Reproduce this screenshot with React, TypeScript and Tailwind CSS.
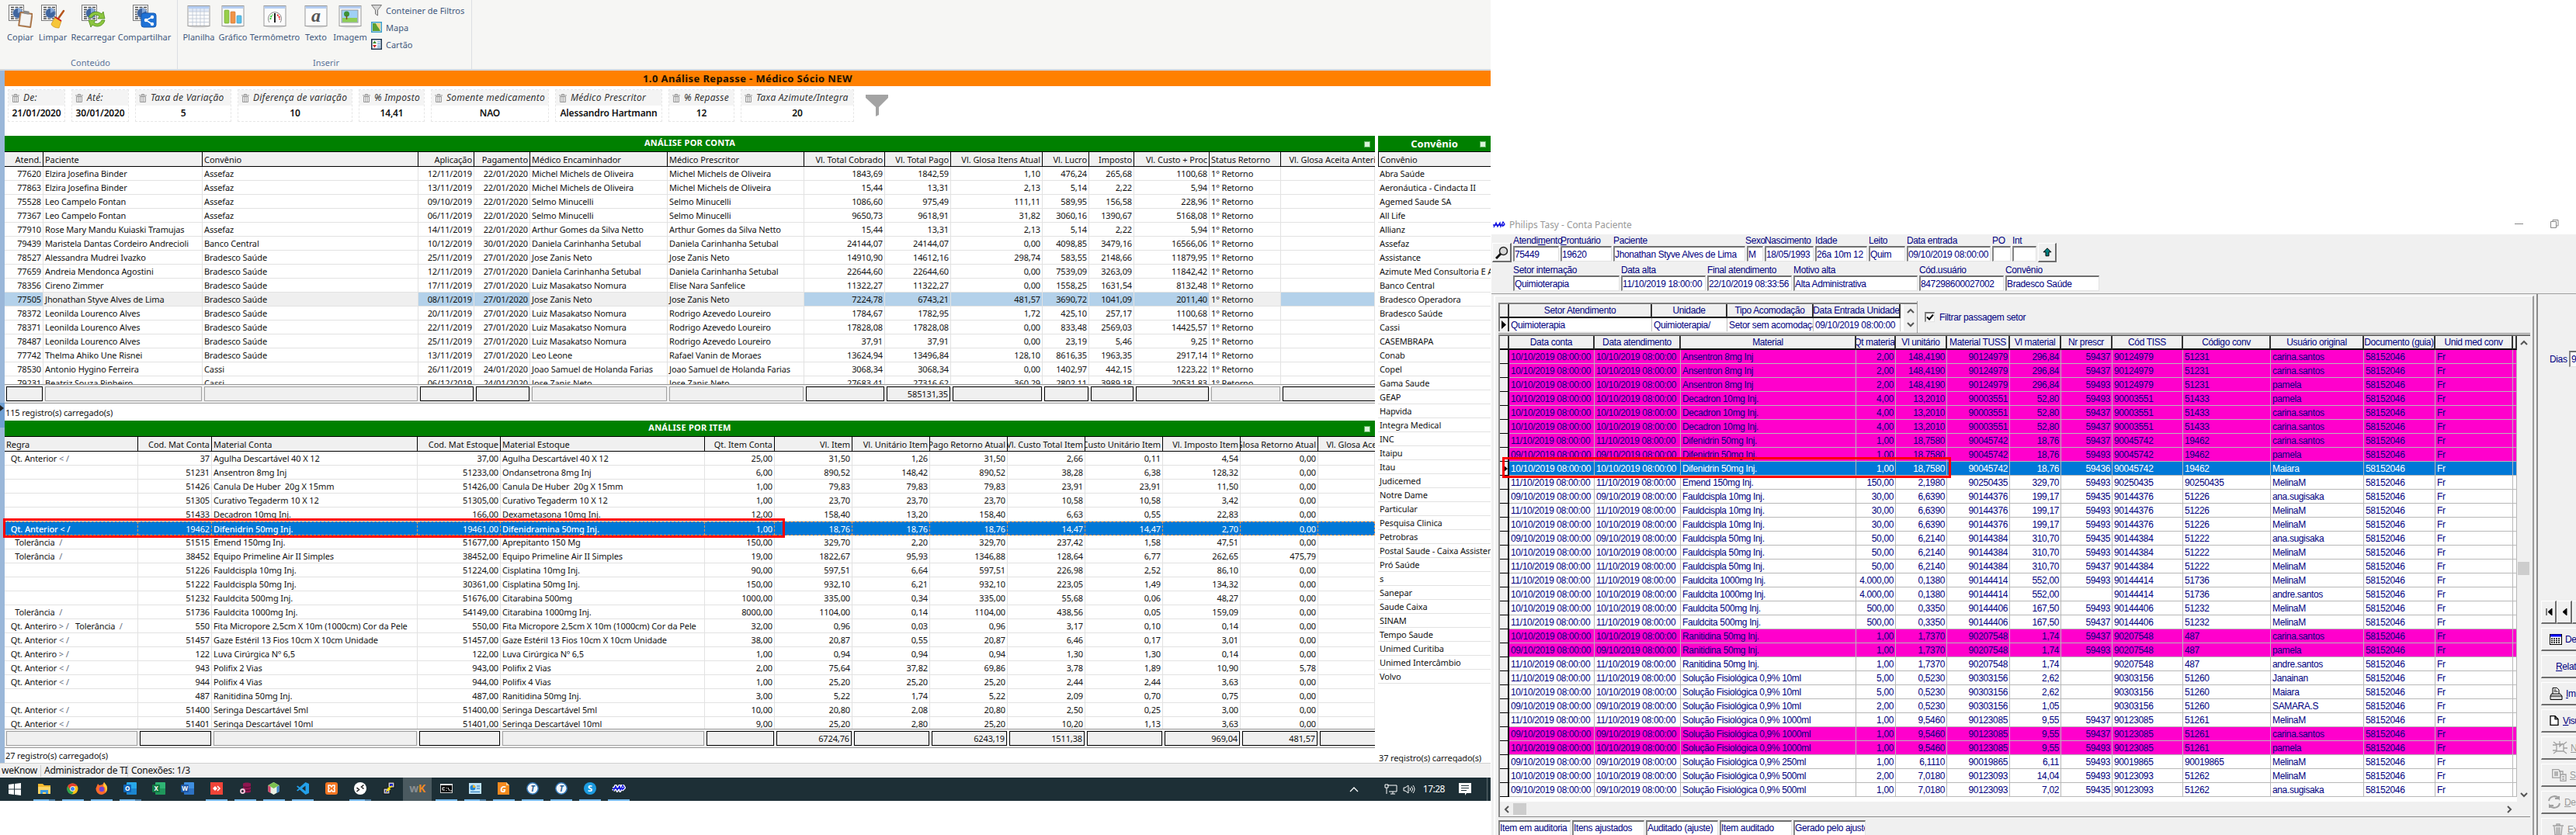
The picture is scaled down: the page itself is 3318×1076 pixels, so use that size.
import React from "react";

const contaCols =
  "grid-cols-[50px_205px_278px_72px_72px_177px_176px_104px_85px_118px_60px_58px_97px_92px_121px]";
const itemCols =
  "grid-cols-[172px_95px_265px_107px_263px_90px_100px_100px_100px_100px_100px_100px_100px_73px]";
const tasyCols =
  "grid-cols-[12px_110px_111px_226px_51px_66px_81px_66px_66px_91px_113px_120px_92px_100px_5px]";

const contaHead =
  "Atend.|Paciente|Convênio|Aplicação|Pagamento|Médico Encaminhador|Médico Prescritor|Vl. Total Cobrado|Vl. Total Pago|Vl. Glosa Itens Atual|Vl. Lucro|Imposto|Vl. Custo + Proc|Status Retorno|   Vl. Glosa Aceita Anterior".split("|");
const contaAlign = "rllrrllrrrrrrll";
const conta = `77620|Elzira Josefina Binder|Assefaz|12/11/2019|22/01/2020|Michel Michels de Oliveira|Michel Michels de Oliveira|1843,69|1842,59|1,10|476,24|265,68|1100,68
77863|Elzira Josefina Binder|Assefaz|13/11/2019|22/01/2020|Michel Michels de Oliveira|Michel Michels de Oliveira|15,44|13,31|2,13|5,14|2,22|5,94
75528|Leo Campelo Fontan|Assefaz|09/10/2019|22/01/2020|Selmo Minucelli|Selmo Minucelli|1086,60|975,49|111,11|589,95|156,58|228,96
77367|Leo Campelo Fontan|Assefaz|06/11/2019|22/01/2020|Selmo Minucelli|Selmo Minucelli|9650,73|9618,91|31,82|3060,16|1390,67|5168,08
77910|Rose Mary Mandu Kuiaski Tramujas|Assefaz|14/11/2019|22/01/2020|Arthur Gomes da Silva Netto|Arthur Gomes da Silva Netto|15,44|13,31|2,13|5,14|2,22|5,94
79439|Maristela Dantas Cordeiro Andrecioli|Banco Central|10/12/2019|30/01/2020|Daniela Carinhanha Setubal|Daniela Carinhanha Setubal|24144,07|24144,07|0,00|4098,85|3479,16|16566,06
78527|Alessandra Mudrei Ivazko|Bradesco Saúde|25/11/2019|27/01/2020|Jose Zanis Neto|Jose Zanis Neto|14910,90|14612,16|298,74|583,55|2148,66|11879,95
77659|Andreia Mendonca Agostini|Bradesco Saúde|12/11/2019|27/01/2020|Daniela Carinhanha Setubal|Daniela Carinhanha Setubal|22644,60|22644,60|0,00|7539,09|3263,09|11842,42
78356|Cireno Zimmer|Bradesco Saúde|17/11/2019|27/01/2020|Luiz Masakatso Nomura|Elise Nara Sanfelice|11322,27|11322,27|0,00|1558,25|1631,54|8132,48
77505|Jhonathan Styve Alves de Lima|Bradesco Saúde|08/11/2019|27/01/2020|Jose Zanis Neto|Jose Zanis Neto|7224,78|6743,21|481,57|3690,72|1041,09|2011,40
78372|Leonilda Lourenco Alves|Bradesco Saúde|20/11/2019|27/01/2020|Luiz Masakatso Nomura|Rodrigo Azevedo Loureiro|1784,67|1782,95|1,72|425,10|257,17|1100,68
78371|Leonilda Lourenco Alves|Bradesco Saúde|22/11/2019|27/01/2020|Luiz Masakatso Nomura|Rodrigo Azevedo Loureiro|17828,08|17828,08|0,00|833,48|2569,03|14425,57
78487|Leonilda Lourenco Alves|Bradesco Saúde|25/11/2019|27/01/2020|Luiz Masakatso Nomura|Rodrigo Azevedo Loureiro|37,91|37,91|0,00|23,19|5,46|9,25
77742|Thelma Ahiko Une Risnei|Bradesco Saúde|13/11/2019|27/01/2020|Leo Leone|Rafael Vanin de Moraes|13624,94|13496,84|128,10|8616,35|1963,35|2917,14
78530|Antonio Hygino Ferreira|Cassi|26/11/2019|24/01/2020|Joao Samuel de Holanda Farias|Joao Samuel de Holanda Farias|3068,34|3068,34|0,00|1402,97|442,15|1223,22
79231|Beatriz Souza Pinheiro|Cassi|06/12/2019|24/01/2020|Jose Zanis Neto|Jose Zanis Neto|27683,41|27316,62|360,29|2802,11|3989,18|20531,83`
  .split("\n")
  .map((r) => (r + "|1° Retorno|").split("|"));

const itemHead =
  "Regra|Cod. Mat Conta|Material Conta|Cod. Mat Estoque|Material Estoque|Qt. Item Conta|Vl. Item|Vl. Unitário Item|Vl. Pago Retorno Atual|Vl. Custo Total Item|Vl. Custo Unitário Item|Vl. Imposto Item|Vl. Glosa Retorno Atual|   Vl. Glosa Aceita".split("|");
const itemAlign = "lrlrlrrrrrrrrl";
const item = ` Qt. Anterior < /|37|Agulha Descartável 40 X 12|37,00|Agulha Descartável 40 X 12|25,00|31,50|1,26|31,50|2,66|0,11|4,54|0,00
|51231|Ansentron 8mg Inj|51233,00|Ondansetrona 8mg Inj|6,00|890,52|148,42|890,52|38,28|6,38|128,32|0,00
|51426|Canula De Huber  20g X 15mm|51426,00|Canula De Huber  20g X 15mm|1,00|79,83|79,83|79,83|23,91|23,91|11,50|0,00
|51305|Curativo Tegaderm 10 X 12|51305,00|Curativo Tegaderm 10 X 12|1,00|23,70|23,70|23,70|10,58|10,58|3,42|0,00
|51433|Decadron 10mg Inj.|166,00|Dexametasona 10mg Inj.|12,00|158,40|13,20|158,40|6,63|0,55|22,83|0,00
 Qt. Anterior < /|19462|Difenidrin 50mg Inj.|19461,00|Difenidramina 50mg Inj.|1,00|18,76|18,76|18,76|14,47|14,47|2,70|0,00
   Tolerância  /|51515|Emend 150mg Inj.|51677,00|Aprepitanto 150 Mg|150,00|329,70|2,20|329,70|237,42|1,58|47,51|0,00
   Tolerância  /|38452|Equipo Primeline Air II Simples|38452,00|Equipo Primeline Air II Simples|19,00|1822,67|95,93|1346,88|128,64|6,77|262,65|475,79
|51226|Fauldcispla 10mg Inj.|51224,00|Cisplatina 10mg Inj.|90,00|597,51|6,64|597,51|226,98|2,52|86,10|0,00
|51222|Fauldcispla 50mg Inj.|30361,00|Cisplatina 50mg Inj.|150,00|932,10|6,21|932,10|223,05|1,49|134,32|0,00
|51232|Fauldcita 500mg Inj.|51676,00|Citarabina 500mg|1000,00|335,00|0,34|335,00|55,68|0,06|48,27|0,00
   Tolerância  /|51736|Fauldcita 1000mg Inj.|54149,00|Citarabina 1000mg Inj.|8000,00|1104,00|0,14|1104,00|438,56|0,05|159,09|0,00
 Qt. Anteriro > /   Tolerância  /|550|Fita Micropore 2,5cm X 10m (1000cm) Cor da Pele|550,00|Fita Micropore 2,5cm X 10m (1000cm) Cor da Pele|32,00|0,96|0,03|0,96|3,17|0,10|0,14|0,00
 Qt. Anterior < /|51457|Gaze Estéril 13 Fios 10cm X 10cm Unidade|51457,00|Gaze Estéril 13 Fios 10cm X 10cm Unidade|38,00|20,87|0,55|20,87|6,46|0,17|3,01|0,00
 Qt. Anteriro > /|122|Luva Cirúrgica Nº 6,5|122,00|Luva Cirúrgica Nº 6,5|1,00|0,94|0,94|0,94|1,30|1,30|0,14|0,00
 Qt. Anterior < /|943|Polifix 2 Vias|943,00|Polifix 2 Vias|2,00|75,64|37,82|69,86|3,78|1,89|10,90|5,78
 Qt. Anterior < /|944|Polifix 4 Vias|944,00|Polifix 4 Vias|1,00|25,20|25,20|25,20|2,44|2,44|3,63|0,00
|487|Ranitidina 50mg Inj.|487,00|Ranitidina 50mg Inj.|3,00|5,22|1,74|5,22|2,09|0,70|0,75|0,00
 Qt. Anterior < /|51400|Seringa Descartável 5ml|51400,00|Seringa Descartável 5ml|10,00|20,80|2,08|20,80|2,50|0,25|3,00|0,00
 Qt. Anterior < /|51401|Seringa Descartável 10ml|51401,00|Seringa Descartável 10ml|9,00|25,20|2,80|25,20|10,20|1,13|3,63|0,00`
  .split("\n")
  .map((r) => (r + "|").split("|"));

const convenios =
  "Abra Saúde|Aeronáutica - Cindacta II|Agemed Saude SA|All Life|Allianz|Assefaz|Assistance|Azimute Med Consultoria E Assessoria|Banco Central|Bradesco Operadora|Bradesco Saúde|Cassi|CASEMBRAPA|Conab|Copel|Gama Saude|GEAP|Hapvida|Integra Medical|INC|Itaipu|Itau|Judicemed|Notre Dame|Particular|Pesquisa Clinica|Petrobras|Postal Saude - Caixa Assistencial|Pró Saúde|s|Sanepar|Saude Caixa|SINAM|Tempo Saude|Unimed Curitiba|Unimed Intercâmbio|Volvo".split("|");

const tasyHead =
  "|Data conta|Data atendimento|Material|Qt material|Vl unitário|Material TUSS|Vl material|Nr prescr|Cód TISS|Código conv|Usuário original|Documento (guia)|Unid med conv|".split("|");
const tasyAlign = "llllrrrrrllllll";
// tone, day, material, quantity, unit price, TUSS, total, prescription, code, user
const tasy = `m|10|Ansentron 8mg Inj|2,00|148,4190|90124979|296,84|59437|51231|carina.santos
m|10|Ansentron 8mg Inj|2,00|148,4190|90124979|296,84|59437|51231|carina.santos
m|10|Ansentron 8mg Inj|2,00|148,4190|90124979|296,84|59493|51231|pamela
m|10|Decadron 10mg Inj.|4,00|13,2010|90003551|52,80|59493|51433|pamela
m|10|Decadron 10mg Inj.|4,00|13,2010|90003551|52,80|59437|51433|carina.santos
m|10|Decadron 10mg Inj.|4,00|13,2010|90003551|52,80|59437|51433|carina.santos
m|11|Difenidrin 50mg Inj.|1,00|18,7580|90045742|18,76|59437|19462|carina.santos
m|09|Difenidrin 50mg Inj.|1,00|18,7580|90045742|18,76|59493|19462|pamela
s|10|Difenidrin 50mg Inj.|1,00|18,7580|90045742|18,76|59436|19462|Maiara
w|11|Emend 150mg Inj.|150,00|2,1980|90250435|329,70|59493|90250435|MelinaM
w|09|Fauldcispla 10mg Inj.|30,00|6,6390|90144376|199,17|59435|51226|ana.sugisaka
w|11|Fauldcispla 10mg Inj.|30,00|6,6390|90144376|199,17|59493|51226|MelinaM
w|10|Fauldcispla 10mg Inj.|30,00|6,6390|90144376|199,17|59493|51226|MelinaM
w|09|Fauldcispla 50mg Inj.|50,00|6,2140|90144384|310,70|59435|51222|ana.sugisaka
w|10|Fauldcispla 50mg Inj.|50,00|6,2140|90144384|310,70|59493|51222|MelinaM
w|11|Fauldcispla 50mg Inj.|50,00|6,2140|90144384|310,70|59437|51222|MelinaM
w|11|Fauldcita 1000mg Inj.|4.000,00|0,1380|90144414|552,00|59493|51736|MelinaM
w|10|Fauldcita 1000mg Inj.|4.000,00|0,1380|90144414|552,00||51736|andre.santos
w|10|Fauldcita 500mg Inj.|500,00|0,3350|90144406|167,50|59493|51232|MelinaM
w|11|Fauldcita 500mg Inj.|500,00|0,3350|90144406|167,50|59437|51232|MelinaM
m|10|Ranitidina 50mg Inj.|1,00|1,7370|90207548|1,74|59437|487|carina.santos
m|09|Ranitidina 50mg Inj.|1,00|1,7370|90207548|1,74|59493|487|pamela
w|11|Ranitidina 50mg Inj.|1,00|1,7370|90207548|1,74||487|andre.santos
w|11|Solução Fisiológica 0,9% 10ml|5,00|0,5230|90303156|2,62||51260|Janainan
w|10|Solução Fisiológica 0,9% 10ml|5,00|0,5230|90303156|2,62||51260|Maiara
w|09|Solução Fisiológica 0,9% 10ml|2,00|0,5230|90303156|1,05||51260|SAMARA.S
w|11|Solução Fisiológica 0,9% 1000ml|1,00|9,5460|90123085|9,55|59437|51261|MelinaM
m|09|Solução Fisiológica 0,9% 1000ml|1,00|9,5460|90123085|9,55|59437|51261|carina.santos
m|10|Solução Fisiológica 0,9% 1000ml|1,00|9,5460|90123085|9,55|59493|51261|pamela
w|09|Solução Fisiológica 0,9% 250ml|1,00|6,1110|90019865|6,11|59493|90019865|MelinaM
w|10|Solução Fisiológica 0,9% 500ml|2,00|7,0180|90123093|14,04|59493|51262|MelinaM
w|09|Solução Fisiológica 0,9% 500ml|1,00|7,0180|90123093|7,02|59435|51262|ana.sugisaka`
  .split("\n")
  .map((r) => {
    const [tone, d, mat, q, u, tuss, tot, presc, cod, user] = r.split("|");
    const date = `${d}/10/2019 08:00:00`;
    return { tone, cells: ["", date, date, mat, q, u, tuss, tot, presc, tuss, cod, user, "58152046", "Fr", ""] };
  });

/* ---------- report grids ---------- */

function HeadRow({ cols, labels, align }: { cols: string; labels: string[]; align: string }) {
  return (
    <div className={`grid h-5 border-y border-black bg-[#f0f0f0] tracking-[-0.05px] ${cols}`}>
      {labels.map((l, i) => (
        <div
          key={i}
          className={`flex items-center overflow-hidden whitespace-pre px-[2px] ${
            i < labels.length - 1 ? "border-r border-black" : ""
          } ${align[i] === "r" ? "justify-end" : "justify-start"}`}
        >
          {l}
        </div>
      ))}
    </div>
  );
}

function Totals({ cols, align, values }: { cols: string; align: string; values: Record<number, string> }) {
  return (
    <div className={`grid border-y border-[#999] bg-[#f0f0f0] ${cols}`}>
      {align.split("").map((a, i) => {
        const last = i === align.length - 1;
        const money = a === "r" || last;
        return (
          <div
            key={i}
            className={`my-[2px] ml-[2px] flex items-center justify-end overflow-hidden border px-[2px] ${
              money ? "border-black" : "border-[#a0a0a0]"
            } ${last ? "border-r-0" : "mr-px"}`}
          >
            {values[i] ?? ""}
          </div>
        );
      })}
    </div>
  );
}

function GreenBar({ title, big }: { title: string; big?: boolean }) {
  return (
    <div className="relative flex h-5 shrink-0 items-center justify-center bg-[#008000] font-bold text-white">
      <span className={big ? "text-[13px] tracking-normal" : "-mt-1 text-[11px] tracking-[0.25px]"}>{title}</span>
      <span className="absolute right-[6px] top-[7px] size-[8px] border border-[#5fb35f] bg-[#d9f5d9]" />
    </div>
  );
}

function Regra({ text, sel }: { text: string; sel: boolean }) {
  return (
    <>
      {text.split(/([<>/])/).map((p, i) => (
        <span key={i} className={!sel && /[<>/]/.test(p) ? "text-gray-500" : ""}>
          {p}
        </span>
      ))}
    </>
  );
}

/* ---------- toolbar ---------- */

function ReportBase() {
  return (
    <>
      <rect x="0.5" y="0.5" width="19" height="20" fill="#fafafa" stroke="#7a7a7a" />
      <path
        d="M3 3.500h15M3 6.500h15M3 9.500h15M3 12.500h15M3 15.500h15M3 18h15"
        stroke="#4a4a4a"
        strokeWidth="1.500"
        strokeDasharray="4 1.500"
      />
      <circle cx="12" cy="11" r="6.500" fill="#3f659f" stroke="#b9c9e2" strokeWidth=".8" />
      <path d="M12 11V4.500a6.500 6.500 0 0 1 5.500 3.500z" fill="#86a8d8" />
    </>
  );
}

function Frame({ children }: { children?: React.ReactNode }) {
  return (
    <svg width="31" height="32" viewBox="0 0 31 32">
      <ellipse cx="15.500" cy="29" rx="13" ry="2" fill="#ddd" />
      <rect x="1" y="2.500" width="28" height="26" fill="#fbfbfb" stroke="#9a9a9a" />
      <rect x="1.500" y="3" width="27" height="3" fill="#b4cdf2" />
      {children}
    </svg>
  );
}

const contentTools = [
  {
    label: "Copiar",
    w: "w-[42px]",
    art: (
      <g transform="rotate(8 22 22)">
        <rect x="13" y="10" width="17" height="19" rx="1" fill="#a86f3f" />
        <rect x="15" y="12" width="13" height="15" fill="#f4f4f4" stroke="#ccc" strokeWidth=".5" />
        <rect x="18" y="8" width="7" height="4" rx="1" fill="#8b8b8b" />
      </g>
    ),
  },
  {
    label: "Limpar",
    w: "w-[42px]",
    art: (
      <>
        <path d="M29 8L22 18" stroke="#b5551d" strokeWidth="2.500" strokeLinecap="round" />
        <path d="M18 16l8 5-3 9c-5 0-9-2-10-5z" fill="#f6c63a" stroke="#c98f17" strokeWidth=".7" />
        <path d="M18 16l8 5" stroke="#c22" strokeWidth="2" />
      </>
    ),
  },
  {
    label: "Recarregar",
    w: "w-[62px]",
    art: (
      <>
        <path d="M9 16c3-7 11-9 17-4l2-3 2 9h-9l2-3c-4-3-8-2-10 2z" fill="#8cc63f" stroke="#4c8a14" strokeWidth=".8" />
        <path d="M30 20c-2 8-10 10-16 6l-2 3-3-9h9l-2 3c4 3 8 1 10-3z" fill="#8cc63f" stroke="#4c8a14" strokeWidth=".8" />
      </>
    ),
  },
  {
    label: "Compartilhar",
    w: "w-[70px]",
    art: (
      <>
        <rect x="11" y="11" width="19" height="18" rx="3" fill="#1f72d6" stroke="#1559b0" />
        <path d="M25 16l-8 4 8 5" stroke="#fff" strokeWidth="1.500" fill="none" />
        <circle cx="25" cy="16" r="2.200" fill="#fff" />
        <circle cx="17" cy="20" r="2.200" fill="#fff" />
        <circle cx="25" cy="25" r="2.200" fill="#fff" />
      </>
    ),
  },
];

const insertTools = [
  {
    label: "Planilha",
    w: "w-[46px]",
    art: (
      <>
        <rect x="2" y="6" width="26" height="4" fill="#dfe8f5" />
        <path d="M2 10h26M2 14.500h26M2 19h26M2 23.500h26M7 6v22M12 6v22M17 6v22M22 6v22" stroke="#bcc7d6" strokeWidth=".8" />
      </>
    ),
  },
  {
    label: "Gráfico",
    w: "w-[42px]",
    art: (
      <>
        <rect x="4" y="8" width="6" height="17" rx="1" fill="#97cf4b" stroke="#6ba326" strokeWidth=".6" />
        <rect x="12" y="10" width="6" height="15" rx="1" fill="#ef9448" stroke="#c9702a" strokeWidth=".6" />
        <rect x="20" y="15" width="6" height="10" rx="1" fill="#5cbfe8" stroke="#3597c4" strokeWidth=".6" />
      </>
    ),
  },
  {
    label: "Termômetro",
    w: "w-[66px]",
    art: (
      <>
        <path d="M8 24a8.500 8.500 0 1 1 14 0" fill="none" stroke="#888" strokeWidth="1" />
        <path d="M9.500 20a6 6 0 0 1 3-6" fill="none" stroke="#3c3" strokeWidth="2" strokeDasharray="2 1" />
        <path d="M18 14a6 6 0 0 1 3 6" fill="none" stroke="#e22" strokeWidth="2" strokeDasharray="2 1" />
        <path d="M15 12v12" stroke="#222" strokeWidth="2" />
      </>
    ),
  },
  { label: "Texto", w: "w-[40px]", art: null },
  {
    label: "Imagem",
    w: "w-[48px]",
    art: (
      <>
        <rect x="4" y="8" width="21" height="16" fill="#9fd0f5" stroke="#999" />
        <rect x="5" y="18" width="19" height="5.500" fill="#8fce55" />
        <circle cx="10.500" cy="13" r="3.500" fill="#3d9136" />
        <path d="M10.500 15v5" stroke="#7a4b1c" strokeWidth="1.500" />
      </>
    ),
  },
];

function Toolbar() {
  return (
    <div className="flex h-[91px] shrink-0 border-b-2 border-[#d4d7da] bg-[#f6f6f4] text-[11px] tracking-[0px] text-[#3f587c]">
      <div className="flex w-[229px] flex-col border-r border-[#dcdfe3] pl-[5px]">
        <div className="flex h-[72px] pt-[5px]">
          {contentTools.map((t) => (
            <div key={t.label} className={`flex flex-col items-center ${t.w}`}>
              <svg width="32" height="32" viewBox="-1 -1 32 32">
                <ReportBase />
                {t.art}
              </svg>
              <span className="mt-[3px] leading-4">{t.label}</span>
            </div>
          ))}
        </div>
        <div className="text-center leading-[17px] text-[#5b7399]">Conteúdo</div>
      </div>
      <div className="flex w-[379px] flex-col border-r border-[#dcdfe3] pl-[4px]">
        <div className="flex h-[72px] pt-[5px]">
          {insertTools.map((t) => (
            <div key={t.label} className={`relative flex flex-col items-center ${t.w}`}>
              <Frame>{t.art}</Frame>
              {t.label === "Texto" && (
                <span className="absolute top-[3px] font-['Liberation_Serif'] text-[24px] font-bold italic leading-6 text-[#555]">a</span>
              )}
              <span className="mt-[3px] leading-4">{t.label}</span>
            </div>
          ))}
          <div className="flex flex-col gap-[6px] pl-[3px]">
            <div className="flex h-4 items-center gap-[5px]">
              <svg width="14" height="16" viewBox="0 0 14 16">
                <path d="M.5 1.500h13L8.500 8v7l-3-2V8z" fill="#d5d5d5" stroke="#777" />
              </svg>
              Conteiner de Filtros
            </div>
            <div className="flex h-4 items-center gap-[5px]">
              <svg width="14" height="14" viewBox="0 0 14 14">
                <rect x=".75" y=".75" width="12.500" height="12.500" fill="#fff" stroke="#3b9dc8" strokeWidth="1.500" />
                <path d="M2 2h4l3 4 3 6H2z" fill="#5d9f2f" />
                <path d="M6 2h6v9L8 6z" fill="#f0d98a" />
              </svg>
              Mapa
            </div>
            <div className="flex h-4 items-center gap-[5px]">
              <svg width="14" height="14" viewBox="0 0 14 14">
                <rect x=".75" y=".75" width="12.500" height="12.500" fill="#fff" stroke="#1c3550" strokeWidth="1.500" />
                <path d="M2 6l2.500-3.500L7 6z" fill="#3c8a2e" />
                <path d="M2 8l2.500 3.500L7 8z" fill="#c22" />
                <path d="M8 4h4M8 6.500h4M8 9h4M8 11h4" stroke="#4a90c8" />
              </svg>
              Cartão
            </div>
          </div>
        </div>
        <div className="text-center leading-[17px] text-[#5b7399]">Inserir</div>
      </div>
    </div>
  );
}

/* ---------- filters ---------- */

const filters = [
  { l: "De:", v: "21/01/2020", w: "w-[74px]" },
  { l: "Até:", v: "30/01/2020", w: "w-[74px]" },
  { l: "Taxa de Variação", v: "5", w: "w-[124px]" },
  { l: "Diferença de variação", v: "10", w: "w-[148px]" },
  { l: "% Imposto", v: "14,41", w: "w-[85px]" },
  { l: "Somente medicamento", v: "NAO", w: "w-[152px]" },
  { l: "Médico Prescritor", v: "Alessandro Hartmann", w: "w-[138px]" },
  { l: "% Repasse", v: "12", w: "w-[85px]" },
  { l: "Taxa Azimute/Integra", v: "20", w: "w-[146px]" },
];

function Filters() {
  return (
    <div className="flex h-16 shrink-0 gap-2 bg-white pl-[4px] pt-1 text-[12px] tracking-normal">
      {filters.map((f) => (
        <div key={f.l} className={`h-[42px] border border-dashed border-[#e6e6e6] ${f.w}`}>
          <div className="flex h-5 items-center gap-[5px] whitespace-nowrap bg-[#f4f4f4] pl-[4px] text-[12px] italic tracking-[0.25px] text-[#333]">
            <svg width="10" height="11" viewBox="0 0 10 11" className="shrink-0">
              <path d="M0 2h10M3.500 2V.5h3V2M1.500 3.500h7v7h-7z" fill="none" stroke="#999" />
              <path d="M3.500 4v6M5 4v6M6.500 4v6" stroke="#aaa" strokeWidth=".8" />
            </svg>
            {f.l}
          </div>
          <div className="whitespace-nowrap text-center text-[12px] font-semibold leading-5 tracking-[-0.15px]">{f.v}</div>
        </div>
      ))}
      <svg width="29" height="28" viewBox="0 0 29 28" className="ml-[7px] mt-[7px]">
        <path d="M0 0h29v4L17 16v10l-4 2V16L0 4z" fill="#a3a3a3" />
      </svg>
    </div>
  );
}

/* ---------- taskbar ---------- */

const Doc = ({ bg, dark, ch }: { bg: string; dark: string; ch: string }) => (
  <svg width="17" height="16" viewBox="0 0 17 16">
    <rect x="4" width="13" height="16" rx="1" fill={bg} />
    <path d="M4 8h13v8H4z" fill={dark} opacity=".5" />
    <rect y="3" width="10" height="10" rx="1" fill={dark} />
    <text x="5" y="11" fontSize="8" fontWeight="bold" textAnchor="middle" fill="#fff" fontFamily="Noto Sans">{ch}</text>
  </svg>
);
const Disc = ({ bg, fg, ch }: { bg: string; fg: string; ch: string }) => (
  <svg width="16" height="16" viewBox="0 0 16 16">
    <circle cx="8" cy="8" r="8" fill={bg} />
    <text x="8" y="12" fontSize="11" fontWeight="bold" textAnchor="middle" fill={fg} fontFamily="Noto Sans">{ch}</text>
  </svg>
);
const TDisc = () => (
  <svg width="16" height="16" viewBox="0 0 16 16">
    <circle cx="8" cy="8" r="7.200" fill="#f3f6fa" stroke="#3579b8" strokeWidth="1.500" />
    <text x="8" y="12" fontSize="10" fontStyle="italic" fontWeight="bold" textAnchor="middle" fill="#2a5f96" fontFamily="Noto Sans">T</text>
  </svg>
);
const PhiMark = () => (
  <svg width="18" height="10" viewBox="0 0 18 10">
    <path d="M2 8l3-6 2 5 3-5 1 5 3-6 2 3-3 3M1 5h15" fill="none" stroke="#fff" strokeWidth="4" />
    <path d="M2 8l3-6 2 5 3-5 1 5 3-6 2 3-3 3M1 5h15" fill="none" stroke="#1010e0" strokeWidth="1.300" />
  </svg>
);

// run: 0 closed, 1 open, 2 several windows
const apps: { run: number; el: React.ReactNode }[] = [
  {
    run: 2,
    el: (
      <svg width="16" height="15" viewBox="0 0 16 15">
        <path d="M0 1h6l2 2h8v11H0z" fill="#f5b82e" />
        <path d="M0 5h16v9H0z" fill="#fdd567" />
        <path d="M3 9h10v5h-3v-2H6v2H3z" fill="#3d9be0" />
      </svg>
    ),
  },
  {
    run: 1,
    el: (
      <svg width="15" height="15" viewBox="0 0 15 15">
        <circle cx="7.500" cy="7.500" r="7" fill="#fbc116" />
        <path d="M7.500.5a7 7 0 0 1 6 3.500h-6a3.500 3.500 0 0 0-3 5L1.200 4A7 7 0 0 1 7.500.5z" fill="#e33b2e" />
        <path d="M1.200 4l3.300 5.500a3.500 3.500 0 0 0 4 1.400L7 14.500A7 7 0 0 1 1.200 4z" fill="#2da44e" />
        <circle cx="7.500" cy="7.500" r="3.200" fill="#fff" />
        <circle cx="7.500" cy="7.500" r="2.500" fill="#4285f4" />
      </svg>
    ),
  },
  {
    run: 1,
    el: (
      <svg width="16" height="16" viewBox="0 0 16 16">
        <path d="M3 2l2 2 4-1 2-3 3 4a8 8 0 0 1-6 12A7.500 7.500 0 0 1 .5 8z" fill="#ff6a2b" />
        <path d="M11 0l3 4a8 8 0 0 1-1 9c-1-1 1-6-3-8z" fill="#ffc93a" />
        <circle cx="8" cy="9" r="3.200" fill="#7444d4" />
      </svg>
    ),
  },
  { run: 2, el: <Doc bg="#28a8ea" dark="#0f64b8" ch="O" /> },
  { run: 0, el: <Doc bg="#2fb474" dark="#117a43" ch="X" /> },
  { run: 0, el: <Doc bg="#3f8fe0" dark="#1d57a8" ch="W" /> },
  {
    run: 1,
    el: (
      <svg width="16" height="16" viewBox="0 0 16 16">
        <rect width="16" height="16" fill="#f04438" />
        <path d="M3 8l3-3 3 3-3 3z" fill="#fff" />
        <path d="M9 5l3 3-3 3" stroke="#fff" strokeWidth="1.500" fill="none" />
      </svg>
    ),
  },
  {
    run: 1,
    el: (
      <svg width="16" height="16" viewBox="0 0 16 16">
        <path d="M5 2c0-2 10-2 10 0v10c0 2-10 2-10 0z" fill="#8f1650" />
        <path d="M5 5c0 2 10 2 10 0M5 9c0 2 10 2 10 0" stroke="#4d0b2c" fill="none" />
        <circle cx="4.500" cy="11.500" r="2.500" fill="none" stroke="#f3c9dc" strokeWidth="1.800" />
      </svg>
    ),
  },
  {
    run: 1,
    el: (
      <svg width="15" height="16" viewBox="0 0 15 16">
        <path d="M7.500 0l7 4v8l-7 4-7-4V4z" fill="#e9f1e4" />
        <path d="M7.500 0l7 4-7 4-7-4z" fill="#7cc04f" />
        <path d="M.5 4l3 2v8l-3-2z" fill="#d8436b" />
        <path d="M14.500 4l-3 2v8l3-2z" fill="#3d87c9" />
      </svg>
    ),
  },
  {
    run: 1,
    el: (
      <svg width="16" height="16" viewBox="0 0 16 16">
        <path d="M11.500 0L16 2v12l-4.500 2L4 9.500 1.500 11.500 0 10.500 3 8 0 5.500l1.500-1L4 6.500zM11.500 4.500L7 8l4.500 3.500z" fill="#23a0ea" />
      </svg>
    ),
  },
  {
    run: 0,
    el: (
      <svg width="16" height="16" viewBox="0 0 16 16">
        <rect width="16" height="16" rx="3" fill="#f37623" />
        <path d="M4 4h2.500L8 6l1.500-2H12v3l-1 1 1 1v3H9.500L8 10l-1.500 2H4V9l1-1-1-1z" fill="none" stroke="#fff" strokeWidth="1.500" />
      </svg>
    ),
  },
  {
    run: 2,
    el: (
      <svg width="16" height="16" viewBox="0 0 16 16">
        <circle cx="8" cy="8" r="8" fill="#fff" />
        <path d="M3.500 7l3 2.500-3 2.500M12.500 3.500l-3 2.500 3 2.500" stroke="#222" strokeWidth="1.600" fill="none" />
      </svg>
    ),
  },
  {
    run: 0,
    el: (
      <svg width="16" height="16" viewBox="0 0 16 16">
        <rect x="7" y="0" width="8" height="7" fill="#ccc" stroke="#111" />
        <rect x="9" y="2" width="4" height="3" fill="#1b22c8" />
        <rect x="1" y="8" width="8" height="7" fill="#ccc" stroke="#111" />
        <rect x="3" y="10" width="4" height="3" fill="#1b22c8" />
        <path d="M12 5L7 8l2 1-5 3" stroke="#ffe600" strokeWidth="1.500" fill="none" />
      </svg>
    ),
  },
  {
    run: 0,
    el: (
      <span className="text-[14px] font-bold tracking-[-0.5px] text-[#8b8f92]">
        w<span className="text-[#f08a1d]">K</span>
      </span>
    ),
  },
  {
    run: 1,
    el: (
      <svg width="16" height="12" viewBox="0 0 16 12">
        <rect x=".5" y=".5" width="15" height="11" fill="#000" stroke="#ccc" />
        <path d="M0 1h16" stroke="#eee" strokeWidth="2" />
        <path d="M3 5h3M3 5v3h3M8 5v1M8 8v1M10 5l2 4M13 9h2" stroke="#fff" />
      </svg>
    ),
  },
  {
    run: 2,
    el: (
      <svg width="16" height="14" viewBox="0 0 16 14">
        <rect width="16" height="14" fill="#bfe4f8" />
        <circle cx="5" cy="6" r="3.500" fill="#2a87cf" />
        <path d="M5 6V2.500A3.500 3.500 0 0 1 8.500 6z" fill="#f2b632" />
        <path d="M10 4h4M10 7h4M2 11.500h12" stroke="#2673b3" />
      </svg>
    ),
  },
  {
    run: 1,
    el: (
      <svg width="15" height="16" viewBox="0 0 15 16">
        <path d="M0 0h11l4 4v12H0z" fill="#f58a1f" />
        <path d="M11 0l4 4h-4z" fill="#ffd29b" />
        <text x="7" y="12.500" fontSize="11" fontWeight="bold" fontStyle="italic" textAnchor="middle" fill="#fff" fontFamily="Noto Sans">G</text>
      </svg>
    ),
  },
  { run: 1, el: <TDisc /> },
  { run: 1, el: <TDisc /> },
  { run: 1, el: <Disc bg="#1c9be0" fg="#fff" ch="S" /> },
  { run: 1, el: <PhiMark /> },
];

function Taskbar() {
  return (
    <div className="flex h-[30px] shrink-0 items-stretch bg-[#1d2f36] text-white">
      <div className="flex w-[38px] items-center justify-center">
        <svg width="16" height="16" viewBox="0 0 16 16">
          <path d="M0 2l7-1v6.500H0zM8 1l8-1v7.500H8zM0 8.500h7V15l-7-1zM8 8.500h8V16l-8-1z" fill="#fff" />
        </svg>
      </div>
      {apps.map((a, i) => (
        <div key={i} className={`flex w-[37px] flex-col items-center ${i === 13 ? "bg-[#4b5a60]" : ""}`}>
          <div className="flex h-7 items-center justify-center">{a.el}</div>
          {a.run > 0 && (
            <div className="flex h-[2px] w-7 bg-[#76b9ed]">
              {a.run === 2 && <div className="ml-auto h-full w-2 bg-[#4d7fa6]" />}
            </div>
          )}
        </div>
      ))}
      <div className="ml-auto mr-[4px] flex items-center border-r border-[#5d6b70] pr-[20px]">
        <svg width="12" height="8" viewBox="0 0 12 8" className="mr-[33px]">
          <path d="M1 7l5-5 5 5" stroke="#fff" strokeWidth="1.300" fill="none" />
        </svg>
        <svg width="18" height="14" viewBox="0 0 18 14" className="mr-[6px]">
          <path d="M4 2h12v8H6M8 13h6M11 10v3M1 1h4v4H1zM3 5v8" stroke="#fff" fill="none" />
        </svg>
        <svg width="17" height="14" viewBox="0 0 17 14" className="mr-[9px]">
          <path d="M1 5h2l4-3v10L3 9H1zM9 5q1.500 2 0 4M11 3.500q3 3.500 0 7M13 2q4 5 0 10" stroke="#fff" fill="none" />
        </svg>
        <span className="mr-[18px] text-[12px] tracking-[-0.5px]">17:28</span>
        <svg width="16" height="16" viewBox="0 0 16 16">
          <path d="M0 0h16v13H10l-2 3v-3H0z" fill="#fff" />
          <path d="M3 3.500h10M3 6.500h10M3 9.500h7" stroke="#1d2f36" />
        </svg>
      </div>
    </div>
  );
}

/* ---------- billing window ---------- */

const sunken = "border-l-2 border-t-2 border-r border-b border-l-[#868686] border-t-[#6f6f6f] border-r-[#e3e3e3] border-b-[#e3e3e3] bg-white";
const raised = "border border-b-2 border-r-2 border-white border-b-[#6e6e6e] border-r-[#6e6e6e] bg-[#f0f0f0]";

function Field({ label, value, w, ind }: { label: React.ReactNode; value: string; w: string; ind?: string }) {
  return (
    <div className={`flex shrink-0 flex-col ${w}`}>
      <div className={`h-[14px] whitespace-nowrap leading-[14px] ${ind ?? ""}`}>{label}</div>
      <div className={`mr-[2px] flex h-5 items-center overflow-hidden whitespace-nowrap ${sunken}`}>{value}</div>
    </div>
  );
}

function SideButton({ children, off }: { children: React.ReactNode; off?: boolean }) {
  return (
    <div className={`mb-[5px] flex h-[30px] w-[120px] shrink-0 items-center gap-1 whitespace-nowrap pl-[10px] ${raised} ${off ? "text-[#9a9a9a]" : ""}`}>
      {children}
    </div>
  );
}

function Chevron({ d, cls }: { d: string; cls?: string }) {
  return (
    <svg width="10" height="10" viewBox="0 0 10 10" className={cls}>
      <path d={d} fill="none" stroke="#555" strokeWidth="2" />
    </svg>
  );
}

const tones: Record<string, string> = {
  m: "bg-[#ff00cc] text-[#000080]",
  s: "bg-[#0078d7] text-white",
  w: "bg-white text-[#000080]",
};

function Billing() {
  return (
    <div className="flex h-[1076px] w-[1398px] flex-col overflow-hidden bg-white font-['Liberation_Sans',sans-serif] text-[12px] tracking-[-0.37px] text-[#000080]">
      <div className="mt-[276px] flex h-[26px] shrink-0 items-center pl-[2px] pr-[22px] pt-px">
        <PhiMark />
        <span className="ml-[4px] font-['Noto_Sans',sans-serif] text-[12px] tracking-[-0.05px] text-[#999]">Philips Tasy - Conta Paciente</span>
        <svg width="11" height="11" viewBox="0 0 11 11" className="mb-[3px] ml-auto">
          <path d="M0 5.500h11" stroke="#888" />
        </svg>
        <svg width="11" height="11" viewBox="0 0 11 11" className="mb-[3px] ml-[35px]">
          <path d="M.5 2.500h7v8h-7zM3 2.500v-2h7v7.500H8" stroke="#888" fill="none" />
        </svg>
      </div>

      <div className="ml-px flex h-[77px] shrink-0 flex-col border-b border-[#a0a0a0] bg-[#f0f0f0]">
        <div className="flex h-[35px] pl-px pt-px">
          <div className={`mr-[2px] mt-[10px] flex h-[25px] w-[25px] shrink-0 items-center justify-center ${raised}`}>
            <svg width="17" height="17" viewBox="0 0 17 17">
              <circle cx="10.500" cy="6.500" r="5" fill="#d8d8d8" stroke="#222" strokeWidth="1.500" />
              <path d="M7 10l-6 6" stroke="#111" strokeWidth="3" />
            </svg>
          </div>
          <Field w="w-[61px]" label={<>Atendi<u>m</u>ento</>} value="75449" />
          <Field w="w-[68px]" label={<><u>P</u>rontuário</>} value="19620" />
          <Field w="w-[172px]" label="Paciente" value="Jhonathan Styve Alves de Lima" />
          <Field w="w-[23px]" label="Sexo" value="M" ind="-ml-[2px]" />
          <Field w="w-[65px]" label="Nascimento" value="18/05/1993" />
          <Field w="w-[69px]" label="Idade" value="26a 10m 12" />
          <Field w="w-[49px]" label="Leito" value="Quim" />
          <Field w="w-[110px]" label="Data entrada" value="09/10/2019 08:00:00" />
          <Field w="w-[26px]" label="PO" value="" />
          <Field w="w-[33px]" label="Int" value="" />
          <div className={`mt-[10px] flex h-[25px] w-[24px] shrink-0 items-center justify-center ${raised}`}>
            <svg width="12" height="12" viewBox="0 0 12 12">
              <path d="M6 .8l5 5H8v5H4v-5H1z" fill="#008080" stroke="#000" />
            </svg>
          </div>
        </div>
        <div className="flex pl-[28px] pt-[4px]">
          <Field w="w-[139px]" label="Setor internação" value="Quimioterapia" />
          <Field w="w-[111px]" label="Data alta" value="11/10/2019 18:00:00" />
          <Field w="w-[111px]" label="Final atendimento" value="22/10/2019 08:33:56" />
          <Field w="w-[162px]" label="Motivo alta" value="Alta Administrativa" />
          <Field w="w-[111px]" label="Cód.usuário" value="847298600027002" />
          <Field w="w-[123px]" label="Convênio" value="Bradesco Saúde" />
        </div>
      </div>

      <div className="ml-px flex min-h-0 flex-1 bg-[#f0f0f0]">
        <div className="flex w-[1348px] shrink-0 flex-col border-r-2 border-[#8b8b8b] pl-[3px] pr-[3px] pt-[2px]">
          <div className="flex min-h-0 flex-1 flex-col border-l-2 border-r-2 border-t border-white border-r-[#9a9a9a] pl-[4px] pr-[3px]">
            {/* ward passage */}
            <div className="mt-[8px] flex h-[40px] shrink-0 border-b border-[#8b8b8b]">
              <div className="flex h-[37px] w-[539px] border-l-2 border-t-2 border-[#808080] bg-white">
                <div className="grid w-[516px] grid-cols-[12px_184px_97px_111px_112px] grid-rows-[18px_17px]">
                  {["", "Setor Atendimento", "Unidade", "Tipo Acomodação", "Data Entrada Unidade"].map((h, i) => (
                    <div key={i} className="flex items-center justify-center overflow-hidden whitespace-nowrap border-b-2 border-r-2 border-b-black border-r-[#333] bg-[#f0f0f0]">
                      {h}
                    </div>
                  ))}
                  <div className="flex items-center justify-center border-r-2 border-[#333] bg-[#f0f0f0]">
                    <svg width="6" height="11" viewBox="0 0 6 11">
                      <path d="M0 0l6 5.500L0 11z" fill="#000" />
                    </svg>
                  </div>
                  {["Quimioterapia", "Quimioterapia/", "Setor sem acomodação", "09/10/2019 08:00:00"].map((h, i) => (
                    <div key={i} className="flex items-center overflow-hidden whitespace-nowrap border-r border-[#c0c0c0] pl-[2px]">
                      {h}
                    </div>
                  ))}
                </div>
                <div className="ml-auto flex w-[17px] flex-col items-center justify-around bg-[#f0f0f0]">
                  <Chevron d="M1 7l4-4 4 4" />
                  <Chevron d="M1 3l4 4 4-4" />
                </div>
              </div>
              <div className="-mt-[2px] flex flex-1 items-center border-l border-[#a0a0a0] pl-[9px]">
                <div className={`mr-[6px] size-[13px] ${sunken}`}>
                  <svg width="10" height="10" viewBox="0 0 10 10">
                    <path d="M1 4.500l3 3L9 1.500" stroke="#000" strokeWidth="2" fill="none" />
                  </svg>
                </div>
                Filtrar passagem setor
              </div>
            </div>

            {/* billed materials */}
            <div className="mt-px flex h-[622px] shrink-0 flex-col border-b border-l-2 border-t-2 border-[#8b8b8b] border-t-[#6f6f6f] bg-white">
              <div className="flex min-h-0 flex-1">
                <div className="w-[1310px]">
                  <div className={`grid h-[18px] ${tasyCols}`}>
                    {tasyHead.map((h, i) => (
                      <div key={i} className="flex items-center justify-center overflow-hidden whitespace-nowrap border-b-2 border-r-2 border-b-black border-r-[#333] bg-[#f0f0f0]">
                        {h}
                      </div>
                    ))}
                  </div>
                  {tasy.map((r, n) => (
                    <div key={n} className={`grid h-[18px] ${tasyCols} ${tones[r.tone]}`}>
                      {r.cells.map((c, i) =>
                        i === 0 ? (
                          <div key={i} className="flex items-center justify-end border-b border-r-2 border-black bg-[#f0f0f0]">
                            {r.tone === "s" && (
                              <svg width="5" height="8" viewBox="0 0 5 8">
                                <path d="M0 0l5 4-5 4z" fill="#000" />
                              </svg>
                            )}
                          </div>
                        ) : (
                          <div
                            key={i}
                            className={`flex items-center overflow-hidden whitespace-nowrap border-b border-r border-[#b8b8b8] px-[2px] pt-px ${
                              tasyAlign[i] === "r" ? "justify-end" : ""
                            }`}
                          >
                            {c}
                          </div>
                        )
                      )}
                    </div>
                  ))}
                </div>
                <div className="flex w-[17px] flex-col items-center bg-[#f0f0f0] pt-[4px]">
                  <Chevron d="M1 7l4-4 4 4" />
                  <div className="mt-[277px] h-[17px] w-[15px] bg-[#cdcdcd]" />
                  <Chevron d="M1 3l4 4 4-4" cls="mb-[4px] mt-auto" />
                </div>
              </div>
              <div className="flex h-[19px] shrink-0 items-center bg-[#f0f0f0] pl-[4px] pr-[22px]">
                <Chevron d="M7 1L3 5l4 4" />
                <div className="ml-[3px] h-[15px] w-[17px] bg-[#cdcdcd]" />
                <Chevron d="M3 1l4 4-4 4" cls="ml-auto" />
              </div>
            </div>

            <div className="mt-[4px] flex shrink-0 gap-[2px]">
              {["Item em auditoria", "Itens ajustados", "Auditado (ajuste)", "Item auditado", "Gerado pelo ajuste"].map((t) => (
                <div key={t} className={`h-[22px] w-[93px] overflow-hidden whitespace-nowrap leading-[17px] ${sunken}`}>
                  {t}
                </div>
              ))}
            </div>
          </div>
        </div>

        <div className="flex w-[49px] flex-col overflow-hidden pl-[4px]">
          <div className="mt-[73px] flex h-[21px] shrink-0 items-center">
            <span className="ml-[11px] w-[25px] shrink-0">Dias</span>
            <div className={`flex h-[21px] w-[30px] shrink-0 items-center pl-px ${sunken}`}>90</div>
          </div>
          <div className="mb-[5px] mt-[301px] flex h-[30px] shrink-0">
            {["M2 0v9M9 0L4 4.500 9 9z", "M8 0L3 4.500 8 9z", "M3 0l5 4.500L3 9z"].map((d) => (
              <div key={d} className={`flex w-[20px] shrink-0 items-center justify-center ${raised}`}>
                <svg width="10" height="9" viewBox="0 0 10 9">
                  <path d={d} fill="#000" stroke="#000" />
                </svg>
              </div>
            ))}
          </div>
          <SideButton>
            <svg width="16" height="14" viewBox="0 0 16 14" className="shrink-0">
              <rect x=".5" y=".5" width="15" height="13" fill="#fff" stroke="#000" />
              <path d="M1 2h14" stroke="#00f" strokeWidth="3" />
              <path d="M2 6h12M2 8.500h12M2 11h12" stroke="#000" strokeWidth="1.500" strokeDasharray="2 1" />
            </svg>
            Detalhes
          </SideButton>
          <SideButton>
            <span className="ml-[8px]"><u>R</u>elatórios</span>
          </SideButton>
          <SideButton>
            <svg width="17" height="16" viewBox="0 0 17 16" className="shrink-0">
              <path d="M4 8V.5h5.500L12 3v5" fill="#fff" stroke="#000" />
              <path d="M5.500 3h3M5.500 5h5" stroke="#000" />
              <path d="M2.500 8h11l2.500 3v4.500H1V11z" fill="#ddd" stroke="#000" />
              <path d="M1 11h15" stroke="#000" />
            </svg>
            <span><u>I</u>mprimir</span>
          </SideButton>
          <SideButton>
            <svg width="12" height="13" viewBox="0 0 12 13" className="shrink-0">
              <path d="M1 .7h6l4 4v7.600H1zM7 .7v4h4" fill="#fff" stroke="#000" strokeWidth="1.300" />
            </svg>
            <span className="ml-px"><u>V</u>isualizar</span>
          </SideButton>
          <SideButton off>
            <svg width="19" height="17" viewBox="0 0 19 17" className="ml-[4px] shrink-0">
              <path d="M5 4h9v9H5zM1 1l4 3M18 1l-4 3M1 16l4-3M18 16l-4-3M0 5h5M14 9h5M0 12h5M9 0v7l4-4" fill="none" stroke="#a0a0a0" strokeWidth="1.300" />
            </svg>
            <span><u>N</u>ovo</span>
          </SideButton>
          <SideButton off>
            <svg width="19" height="16" viewBox="0 0 19 16" className="ml-[3px] shrink-0">
              <path d="M.7.700h8l2 2v8.500h-10zM3 4h5M3 6h5M3 8h5M9 3h5v4M11 7h7v8.300h-7zM13 10h3M13 13h3" fill="none" stroke="#a0a0a0" strokeWidth="1.300" />
            </svg>
            <span><u>S</u>alvar</span>
          </SideButton>
          <SideButton off>
            <svg width="18" height="17" viewBox="0 0 18 17" className="-ml-[3px] shrink-0">
              <path d="M2 7c1-6 9-8 13-3V1M15 4h-5M16 10c-1 6-9 8-13 3v3M3 13h5" fill="none" stroke="#a0a0a0" strokeWidth="2" />
            </svg>
            <span><u>D</u>esfazer</span>
          </SideButton>
          <SideButton off>
            <svg width="16" height="16" viewBox="0 0 16 16" className="ml-[3px] shrink-0">
              <path d="M1 3h14M6 3V1h4v2M3 4l1 11h8l1-11M6 5v9M8 5v9M10 5v9" fill="none" stroke="#a0a0a0" strokeWidth="1.300" />
            </svg>
            <span><u>E</u>xcluir</span>
          </SideButton>
        </div>
      </div>
    </div>
  );
}

export default function App() {
  return (
    <div className="relative flex h-[1076px] w-[3318px] overflow-hidden bg-white">
      <div className="flex h-[1032px] w-[1920px] shrink-0 flex-col overflow-hidden bg-white font-['Noto_Sans','Open_Sans',sans-serif] text-[11px] leading-none tracking-[-0.12px] text-[#111]">
        <Toolbar />
        <div className="flex h-[892px] shrink-0">
          <div className="w-[6px] shrink-0 bg-[#9ab7d9] pt-[428px]">
            <div className="h-[32px] bg-[#6f9fd2] pt-[3px]">
              <svg width="5" height="8" viewBox="0 0 5 8">
                <path d="M0 0l5 4-5 4z" fill="#222" />
              </svg>
            </div>
          </div>
          <div className="flex w-[1914px] flex-col">
            <div className="flex h-5 shrink-0 items-center justify-center bg-[#ff8000] text-[13px] font-bold tracking-[0.4px] text-[#201000]">
              1.0 Análise Repasse - Médico Sócio NEW
            </div>
            <Filters />
            <div className="flex gap-[4px]">
              <div className="w-[1765px]">
                <GreenBar title="ANÁLISE POR CONTA" />
                <HeadRow cols={contaCols} labels={contaHead} align={contaAlign} />
                <div className="h-[280px] overflow-hidden">
                  {conta.map((r, n) => (
                    <div key={n} className={`grid h-[18px] ${contaCols}`}>
                      {r.map((c, i) => {
                        const text = contaAlign[i] === "l" && i !== 14;
                        return (
                          <div
                            key={i}
                            className={`flex items-center overflow-hidden whitespace-pre border-b border-r border-[#e2e2e2] px-[2px] ${
                              contaAlign[i] === "r" ? "justify-end" : ""
                            } ${n === 9 ? (text ? "bg-[#efefef]" : "bg-[#b3d1ea]") : ""}`}
                          >
                            {c}
                          </div>
                        );
                      })}
                    </div>
                  ))}
                </div>
                <div className="grid h-[25px]">
                  <Totals cols={contaCols} align={contaAlign} values={{ 8: "585131,35" }} />
                </div>
                <div className="flex h-[22px] items-center pl-[1px]">115 registro(s) carregado(s)</div>

                <GreenBar title="ANÁLISE POR ITEM" />
                <HeadRow cols={itemCols} labels={itemHead} align={itemAlign} />
                <div className="h-[357px] overflow-hidden">
                  {item.map((r, n) => {
                    const sel = n === 5;
                    return (
                      <div key={n} className={`grid h-[18px] ${itemCols} ${sel ? "bg-[#0078d7] text-white" : ""}`}>
                        {r.map((c, i) => (
                          <div
                            key={i}
                            className={`flex items-center overflow-hidden whitespace-pre border-b border-r px-[2px] ${
                              sel ? "border-t border-dashed border-[#f0964b]" : "border-[#e2e2e2]"
                            } ${itemAlign[i] === "r" ? "justify-end" : ""} ${sel && i < 5 && itemAlign[i] === "l" ? "font-medium" : ""}`}
                          >
                            {i === 0 ? <span className="pl-[3px]"><Regra text={c} sel={sel} /></span> : c}
                          </div>
                        ))}
                      </div>
                    );
                  })}
                </div>
                <div className="grid h-[25px]">
                  <Totals
                    cols={itemCols}
                    align={itemAlign}
                    values={{ 6: "6724,76", 8: "6243,19", 9: "1511,38", 11: "969,04", 12: "481,57" }}
                  />
                </div>
                <div className="flex h-[19px] items-center pl-[1px]">27 registro(s) carregado(s)</div>
              </div>

              <div className="flex w-[145px] flex-col">
                <GreenBar title="Convênio" big />
                <div className="flex h-5 shrink-0 items-center border-y border-l border-black bg-[#f0f0f0] pl-[2px]">Convênio</div>
                <div>
                  {convenios.map((c) => (
                    <div key={c} className="flex h-[18px] items-center overflow-hidden whitespace-nowrap border-b border-[#e2e2e2] pl-[2px]">
                      {c}
                    </div>
                  ))}
                </div>
                <div className="mt-auto flex h-[14px] items-center pl-[1px]">37 registro(s) carregado(s)</div>
              </div>
            </div>
          </div>
        </div>
        <div className="flex h-[19px] shrink-0 items-center whitespace-nowrap border-t border-[#d0d0d0] bg-[#f0f0f0] text-[12px] tracking-[-0.25px]">
          <span className="flex h-[15px] w-[53px] shrink-0 items-center border-r border-[#ccc] pl-[2px]">weKnow</span>
          <span className="flex h-[15px] w-[112px] shrink-0 items-center border-r border-[#ccc] pl-[4px]">Administrador de TI</span>
          <span className="pl-[4px]">Conexões: 1/3</span>
        </div>
        <Taskbar />
      </div>

      <Billing />

      {/* annotation frames */}
      <div className="absolute left-[4px] top-[668px] h-[25px] w-[1007px] border-[3px] border-[#fe0000]" />
      <div className="absolute left-[1935px] top-[589px] h-[27px] w-[578px] border-[3px] border-[#fe0000]" />
    </div>
  );
}
